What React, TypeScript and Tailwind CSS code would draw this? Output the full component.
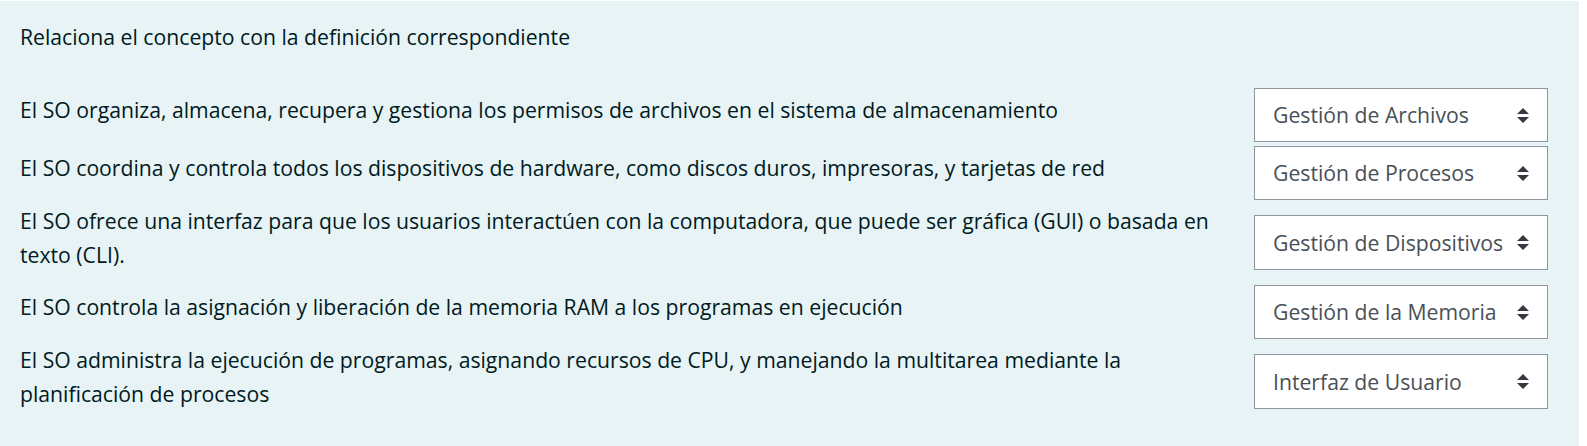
import React from "react";

const rows: { text: React.ReactNode; value: string }[] = [
  {
    text: "El SO organiza, almacena, recupera y gestiona los permisos de archivos en el sistema de almacenamiento",
    value: "Gestión de Archivos",
  },
  {
    text: "El SO coordina y controla todos los dispositivos de hardware, como discos duros, impresoras, y tarjetas de red",
    value: "Gestión de Procesos",
  },
  {
    text: "El SO ofrece una interfaz para que los usuarios interactúen con la computadora, que puede ser gráfica (GUI) o basada en texto (CLI).",
    value: "Gestión de Dispositivos",
  },
  {
    text: "El SO controla la asignación y liberación de la memoria RAM a los programas en ejecución",
    value: "Gestión de la Memoria",
  },
  {
    text: "El SO administra la ejecución de programas, asignando recursos de CPU, y manejando la multitarea mediante la planificación de procesos",
    value: "Interfaz de Usuario",
  },
];

function Arrows() {
  return (
    <svg width="12" height="15" viewBox="0 0 4 5" className="shrink-0">
      <path d="M2 0L0 2h4zm0 5L0 3h4z" fill="#343a40" />
    </svg>
  );
}

export default function App() {
  return (
    <div className="w-[1587px] h-[446px] bg-white pt-px overflow-hidden">
      <div
        className="w-[1579px] h-[460px] bg-[#e7f3f5] text-[#001a1e] pl-[20px] pr-[31px] pt-[19px] text-[21.2px] leading-[33.75px]"
        style={{ fontFamily: '"Open Sans", "Noto Sans", sans-serif' }}
      >
        <p>Relaciona el concepto con la definición correspondiente</p>
        <div className="mt-[34px] flex flex-col gap-[3.5px]">
          {rows.map((r, i) => (
            <div key={i} className="flex items-center justify-between">
              <div className="w-[1200px] pb-[10px]">{r.text}</div>
              <div className="w-[294px] h-[54.5px] bg-white border-[1.5px] border-[#8f959e] flex items-center justify-between pl-[18px] pr-[18px] text-[#495057]">
                <span className="whitespace-nowrap">{r.value}</span>
                <Arrows />
              </div>
            </div>
          ))}
        </div>
      </div>
    </div>
  );
}
